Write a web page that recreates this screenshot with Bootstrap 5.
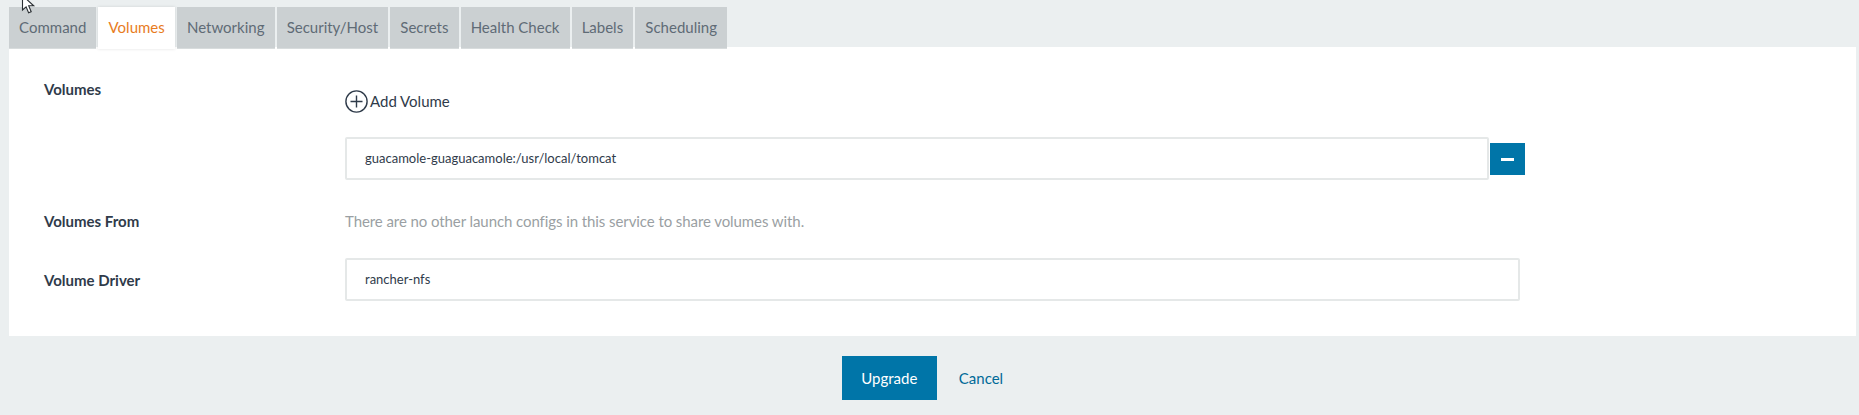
<!DOCTYPE html>
<html lang="en">
<head>
    <meta charset="UTF-8">
    <title>Upgrade Service</title>
    <link href="https://cdn.jsdelivr.net/npm/bootstrap@5.3.0/dist/css/bootstrap.min.css" rel="stylesheet">
<style>
    body {
        background-color: #ebeff0;
        font-family: "Lato", "Open Sans", sans-serif;
        font-size: 15px;
        color: #2f3b4a;
        overflow: hidden;
    }

    /* Outer page wrapper */
    .page-wrap {
        padding: 7px 3px 0 9px;
    }

    /* Tabs */
    .tab-strip {
        gap: 2px;
        position: relative;
        z-index: 1;
    }
    .tab-strip .nav-link {
        height: 42px;
        padding: 0 10.1px;
        line-height: 41px;
        border-radius: 0;
        background-color: #cbd0d2;
        color: #5f6b76;
        font-size: 15px;
        border-bottom: 1px solid #d8dcdd;
    }
    .tab-strip .nav-link.active {
        background-color: #fff;
        color: #e87c1e;
        border-bottom: 0;
        box-shadow: 0 0 3px rgba(0, 0, 0, .12);
    }

    /* White panel */
    .form-panel {
        background-color: #fff;
        margin-top: -2px;
        padding: 32px 35px 35px;
    }
    .field-label {
        width: 301px;
        flex-shrink: 0;
        font-weight: 700;
        line-height: 20px;
    }
    .field-body {
        width: 1175px;
    }
    .add-link {
        display: flex;
        align-items: center;
        gap: 2px;
        height: 23px;
        margin-top: 11px;
        margin-bottom: 24px;
        color: #2f3b4a;
        text-decoration: none;
    }
    .text-field {
        height: 43px;
        border: 2px solid #e5e8e8;
        border-radius: 2px;
        padding: 0 18px 2px;
        font-size: 13px;
        color: #2f3b4a;
    }
    .volume-input {
        flex: none;
        width: 1144px;
    }
    .minus-btn {
        flex: none;
        width: 35px;
        height: 32px;
        margin-left: 1px;
        background-color: #0075a8;
        border: 0;
        border-radius: 0;
        padding: 0;
    }
    .minus-btn span {
        display: block;
        width: 13px;
        height: 3px;
        margin: 1px auto 0;
        background-color: #fff;
    }
    .help-line {
        color: #9a9fa3;
        line-height: 20px;
        letter-spacing: -.08px;
    }
    .from-row { margin-top: 31px; }
    .driver-row { margin-top: 27px; }
    .driver-label { padding-top: 12px; }

    /* Footer buttons */
    .action-bar {
        margin-top: 20px;
    }
    .upgrade-btn {
        width: 95px;
        height: 44px;
        background-color: #0075a8;
        color: #fff;
        border: 0;
        border-radius: 0;
        font-size: 15px;
    }
    .cancel-btn {
        height: 44px;
        padding: 0 20px 0 22px;
        border: 0;
        border-radius: 0;
        color: #006a98;
        font-size: 15px;
    }

    /* Mouse pointer caught in the screenshot */
    .mouse-arrow {
        position: absolute;
        left: 21px;
        top: -6px;
        z-index: 5;
    }
</style>
</head>

<body>
    <svg class="mouse-arrow" width="16" height="21" viewBox="0 0 16 21">
        <path d="M1.5 1.5V16l3.6-3.2 2.5 6 2.6-1.1-2.5-5.9h5z" fill="#fff" stroke="#2a2f33" stroke-width="1.1"/>
    </svg>

    <div class="page-wrap">
        <!-- Tabs -->
        <ul class="nav tab-strip">
            <li class="nav-item"><a class="nav-link" href="#">Command</a></li>
            <li class="nav-item"><a class="nav-link active" href="#">Volumes</a></li>
            <li class="nav-item"><a class="nav-link" href="#">Networking</a></li>
            <li class="nav-item"><a class="nav-link" href="#">Security/Host</a></li>
            <li class="nav-item"><a class="nav-link" href="#">Secrets</a></li>
            <li class="nav-item"><a class="nav-link" href="#">Health Check</a></li>
            <li class="nav-item"><a class="nav-link" href="#">Labels</a></li>
            <li class="nav-item"><a class="nav-link" href="#">Scheduling</a></li>
        </ul>

        <!-- Form Panel -->
        <div class="form-panel">
            <div class="d-flex">
                <div class="field-label">Volumes</div>
                <div class="field-body">
                    <a class="add-link" href="#">
                        <svg width="23" height="23" viewBox="0 0 23 23" fill="none" stroke="#2f3b4a" stroke-width="1.4">
                            <circle cx="11.5" cy="11.5" r="10.6"/>
                            <path d="M11.5 5.5v12M5.5 11.5h12"/>
                        </svg>
                        Add Volume
                    </a>
                    <div class="d-flex align-items-center">
                        <input type="text" class="form-control text-field volume-input" value="guacamole-guaguacamole:/usr/local/tomcat">
                        <button type="button" class="btn minus-btn" aria-label="Remove"><span></span></button>
                    </div>
                </div>
            </div>

            <div class="d-flex from-row">
                <div class="field-label">Volumes From</div>
                <div class="field-body help-line">There are no other launch configs in this service to share volumes with.</div>
            </div>

            <div class="d-flex driver-row">
                <div class="field-label driver-label">Volume Driver</div>
                <div class="field-body">
                    <input type="text" class="form-control text-field" value="rancher-nfs">
                </div>
            </div>
        </div>

        <!-- Actions -->
        <div class="d-flex justify-content-center action-bar">
            <button type="button" class="btn upgrade-btn">Upgrade</button>
            <button type="button" class="btn cancel-btn">Cancel</button>
        </div>
    </div>

    <script src="https://cdn.jsdelivr.net/npm/bootstrap@5.3.0/dist/js/bootstrap.bundle.min.js"></script>
</body>
</html>
